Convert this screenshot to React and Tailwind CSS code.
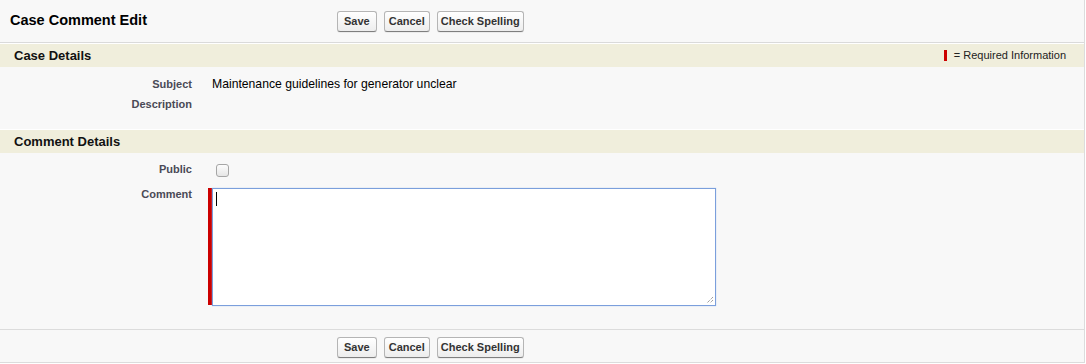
import React from 'react';

const Btn = ({ children, pad }) => (
  <button className={`h-[21px] ${pad} rounded-[3px] border border-[#b5b5b5] border-b-[#7f7f7f] bg-gradient-to-b from-white to-[#ededed] text-[11px] font-bold text-[#333] leading-none shadow-[0_1px_0_rgba(0,0,0,0.05)]`}>
    {children}
  </button>
);

const Buttons = () => (
  <div className="flex gap-[7px]">
    <Btn pad="px-[6px]">Save</Btn>
    <Btn pad="px-[4px]">Cancel</Btn>
    <Btn pad="px-[3px]">Check Spelling</Btn>
  </div>
);

const SectionHeader = ({ title, children }) => (
  <div className="h-[23px] flex items-center justify-between bg-[#f0eedc] pl-[14px] pr-[18px]">
    <h3 className="text-[13px] font-bold text-[#111]">{title}</h3>
    {children}
  </div>
);

const Row = ({ label, children }) => (
  <div className="flex h-[20px] items-center">
    <div className="w-[200px] pr-[8px] text-right text-[11px] font-bold text-[#4a4a56]">{label}</div>
    <div className="pl-[12px] text-[12.2px] text-black">{children}</div>
  </div>
);

export default function App() {
  return (
    <div className="w-[1086px] h-[364px] bg-white font-['Liberation_Sans',Arial,sans-serif]">
      <div className="w-[1085px] h-[363px] bg-[#f8f8f8] border-r border-b border-[#dcdcdc] flex flex-col">
        <div className="h-[42px] flex items-center">
          <h2 className="w-[337px] shrink-0 pl-[10px] text-[14.5px] font-bold text-black">Case Comment Edit</h2>
          <Buttons />
        </div>
        <div className="border-t border-[#dadada] pt-px bg-white">
          <SectionHeader title="Case Details">
            <div className="flex items-center gap-[7px] text-[11px] text-[#222]">
              <span className="w-[3px] h-[11px] bg-[#c00]" />
              <span>= Required Information</span>
            </div>
          </SectionHeader>
        </div>
        <div className="pt-[7px] pb-[15px]">
          <Row label="Subject">Maintenance guidelines for generator unclear</Row>
          <Row label="Description" />
        </div>
        <div className="pt-px bg-white">
          <SectionHeader title="Comment Details" />
        </div>
        <div className="pt-[6px]">
          <Row label="Public">
            <span className="block mt-[3px] ml-[4px] w-[13px] h-[13px] rounded-[3px] border border-[#a6a6a6] bg-gradient-to-b from-[#fdfdfd] to-[#e6e6e6]" />
          </Row>
          <div className="flex mt-[9px]">
            <div className="w-[200px] pr-[8px] text-right text-[11px] leading-[13px] font-bold text-[#4a4a56]">Comment</div>
            <div className="pl-[8px] flex">
              <span className="w-[4px] h-[117px] bg-[#c00]" />
              <div className="relative w-[504px] h-[118px] bg-white border border-[#7b9fdc] shadow-[0_0_1px_#a8c1ee]">
                <span className="absolute left-[3px] top-[3px] w-px h-[14px] bg-black" />
                <svg className="absolute right-[1px] bottom-[1px]" width="8" height="8" viewBox="0 0 8 8">
                  <path d="M7 1 L1 7 M7 4 L4 7" stroke="#777" strokeWidth="1" strokeDasharray="1 1" />
                </svg>
              </div>
            </div>
          </div>
        </div>
        <div className="mt-auto border-t border-[#dcdcdc] h-[33px] flex items-start pt-[7px]">
          <div className="w-[337px] shrink-0" />
          <Buttons />
        </div>
      </div>
    </div>
  );
}
